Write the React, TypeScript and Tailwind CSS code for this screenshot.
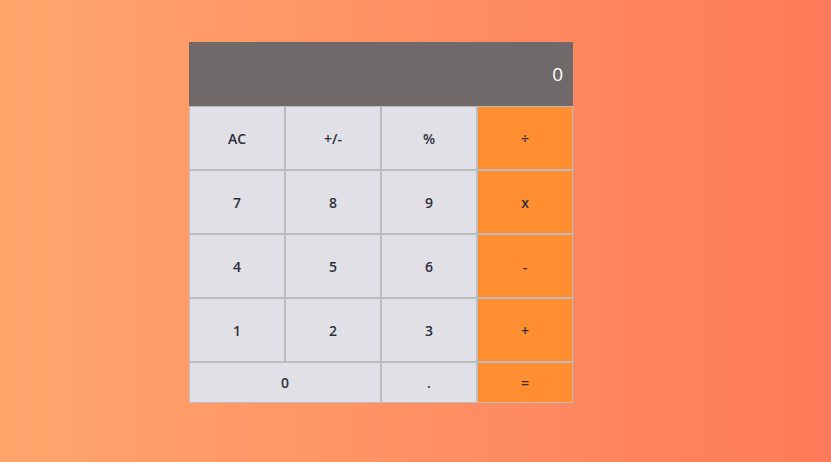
import React from 'react';

const rows: { label: string; wide?: boolean; op?: boolean }[][] = [
  [{ label: 'AC' }, { label: '+/-' }, { label: '%' }, { label: '÷', op: true }],
  [{ label: '7' }, { label: '8' }, { label: '9' }, { label: 'x', op: true }],
  [{ label: '4' }, { label: '5' }, { label: '6' }, { label: '-', op: true }],
  [{ label: '1' }, { label: '2' }, { label: '3' }, { label: '+', op: true }],
];

const Key = ({ label, wide, op, short }: { label: string; wide?: boolean; op?: boolean; short?: boolean }) => (
  <button
    className={`${wide ? 'w-1/2' : 'w-1/4'} ${short ? 'h-[41px]' : 'h-16'} ${
      op ? 'bg-[#fe8e2f]' : 'bg-[#e0e0e6]'
    } border border-[#bcbcbc] text-[14px] font-semibold text-[#2f2f3a] flex items-center justify-center`}
  >
    {label}
  </button>
);

const App = () => {
  return (
    <div
      className="w-full h-[462px] bg-gradient-to-r from-[#ffa56c] to-[#ff7a5a] pt-[42px] pl-[189px]"
      style={{ fontFamily: '"Open Sans", "Noto Sans", sans-serif' }}
    >
      <div className="w-[384px]">
        <div className="h-16 bg-[#6f6a69] flex items-center justify-end pr-[10px] text-white text-[19px]">0</div>
        {rows.map((row, i) => (
          <div key={i} className="flex">
            {row.map((k) => (
              <Key key={k.label} {...k} />
            ))}
          </div>
        ))}
        <div className="flex">
          <Key label="0" wide short />
          <Key label="." short />
          <Key label="=" op short />
        </div>
      </div>
    </div>
  );
};

export default App;
